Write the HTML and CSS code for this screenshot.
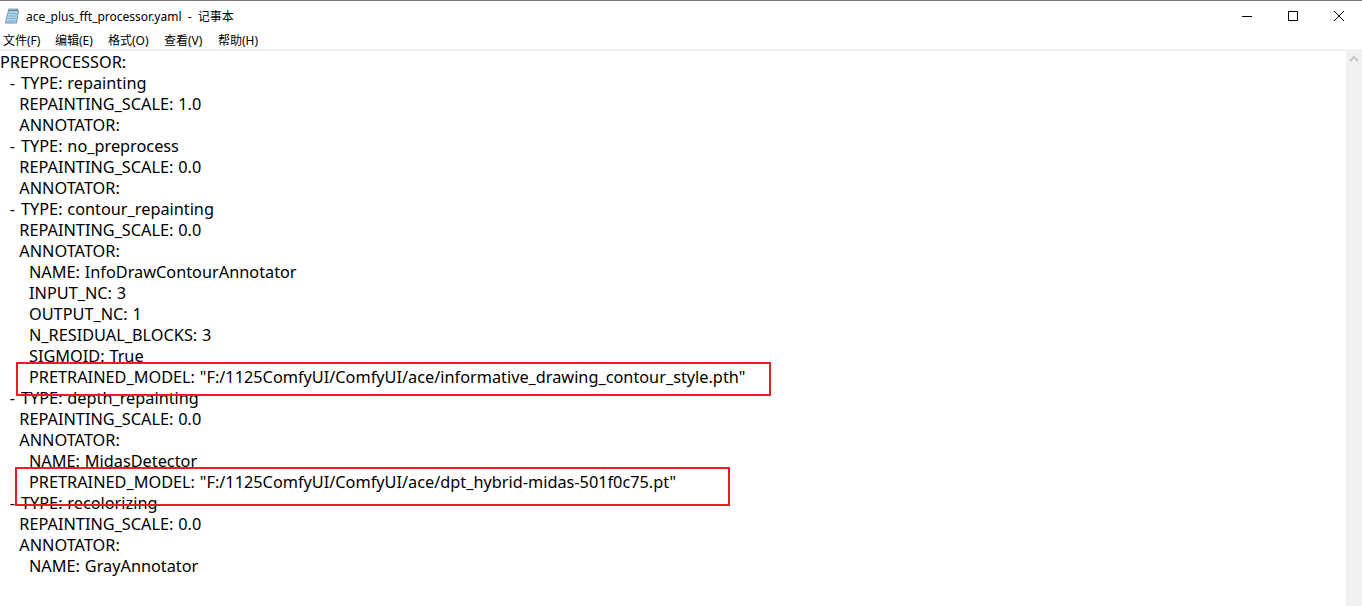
FILE: index.html
```html
<!DOCTYPE html>
<html lang="zh">
<head>
<meta charset="utf-8">
<title>ace_plus_fft_processor.yaml - 记事本</title>
<link rel="stylesheet" href="styles.css">
</head>
<body>
<div class="window">
  <header class="titlebar">
    <svg class="app-icon" width="16" height="18" viewBox="0 0 16 18">
      <path d="M4.5 3.5h10l-2 12.5H1.5z" fill="#a9d3ea" stroke="#6f93ab"/>
      <path d="M5.5 6.5h7.5M5 9h7.5M4.5 11.5h7.5M4 14h7.5" stroke="#7fb0cf"/>
      <path d="M4.5 2.5h10" stroke="#35566f" stroke-width="2" stroke-dasharray="1 1"/>
    </svg>
    <span class="title">ace_plus_fft_processor.yaml - 记事本</span>
    <div class="controls">
      <span class="ctl"><svg width="12" height="12" viewBox="0 0 12 12"><path d="M1 6.5h10" stroke="#000"/></svg></span>
      <span class="ctl"><svg width="12" height="12" viewBox="0 0 12 12"><path d="M1.5 1.5h9v9h-9z" fill="none" stroke="#000"/></svg></span>
      <span class="ctl"><svg width="12" height="12" viewBox="0 0 12 12"><path d="M1 1l10 10M11 1L1 11" stroke="#000"/></svg></span>
    </div>
  </header>
  <nav class="menubar">
    <span>文件(F)</span><span>编辑(E)</span><span>格式(O)</span><span>查看(V)</span><span>帮助(H)</span>
  </nav>
  <main class="editor">
    <pre class="text">PREPROCESSOR:
  <span class="dash">-</span> TYPE: repainting
    REPAINTING_SCALE: 1.0
    ANNOTATOR:
  <span class="dash">-</span> TYPE: no_preprocess
    REPAINTING_SCALE: 0.0
    ANNOTATOR:
  <span class="dash">-</span> TYPE: contour_repainting
    REPAINTING_SCALE: 0.0
    ANNOTATOR:
      NAME: InfoDrawContourAnnotator
      INPUT_NC: 3
      OUTPUT_NC: 1
      N_RESIDUAL_BLOCKS: 3
      SIGMOID: True
      PRETRAINED_MODEL: "F:/1125ComfyUI/ComfyUI/ace/informative_drawing_contour_style.pth"
  <span class="dash">-</span> TYPE: depth_repainting
    REPAINTING_SCALE: 0.0
    ANNOTATOR:
      NAME: MidasDetector
      PRETRAINED_MODEL: "F:/1125ComfyUI/ComfyUI/ace/dpt_hybrid-midas-501f0c75.pt"
  <span class="dash">-</span> TYPE: recolorizing
    REPAINTING_SCALE: 0.0
    ANNOTATOR:
      NAME: GrayAnnotator</pre>
    <aside class="scrollbar">
      <svg width="16" height="16" viewBox="0 0 16 16"><path d="M4 10l4-4 4 4" fill="none" stroke="#c4c4c4" stroke-width="2"/></svg>
    </aside>
  </main>
  <div class="mark mark-one"></div>
  <div class="mark mark-two"></div>
</div>
</body>
</html>
```
FILE: styles.css
```css
html, body { margin: 0; padding: 0; height: 100%; background: #fff; overflow: hidden; }
.window { position: relative; display: flex; flex-direction: column; width: 1362px; height: 606px; font-family: "Noto Sans", "Noto Sans CJK SC", sans-serif; color: #000; }
.titlebar { display: flex; align-items: center; height: 30px; padding-left: 4px; border-top: 1px solid #777; box-sizing: border-box; }
.app-icon { margin-right: 6px; flex: none; }
.title { font-size: 12px; word-spacing: 3px; }
.controls { display: flex; margin-left: auto; }
.ctl { display: flex; align-items: center; justify-content: center; width: 46px; height: 29px; margin-top: 1px; }
.menubar { display: grid; grid-template-columns: 52px 53px 56px 54px auto; height: 19px; padding-left: 3px; font-size: 12px; line-height: 22px; }
.editor { display: flex; flex: 1; min-height: 0; border-top: 2px solid #f0f0f0; }
.text { flex: 1; margin: 0; padding-top: 1px; font-family: "Noto Sans", sans-serif; font-size: 16.3px; line-height: 21px; word-spacing: 0.6px; white-space: pre; }
.dash { letter-spacing: 1.2px; }
.scrollbar { width: 16px; background: #f0f0f0; flex: none; }
.scrollbar svg { display: block; }
.mark { position: absolute; border: 2px solid #ed1c24; box-sizing: border-box; }
.mark-one { left: 16px; top: 362px; width: 755px; height: 34px; }
.mark-two { left: 15px; top: 467px; width: 715px; height: 39px; }
```
